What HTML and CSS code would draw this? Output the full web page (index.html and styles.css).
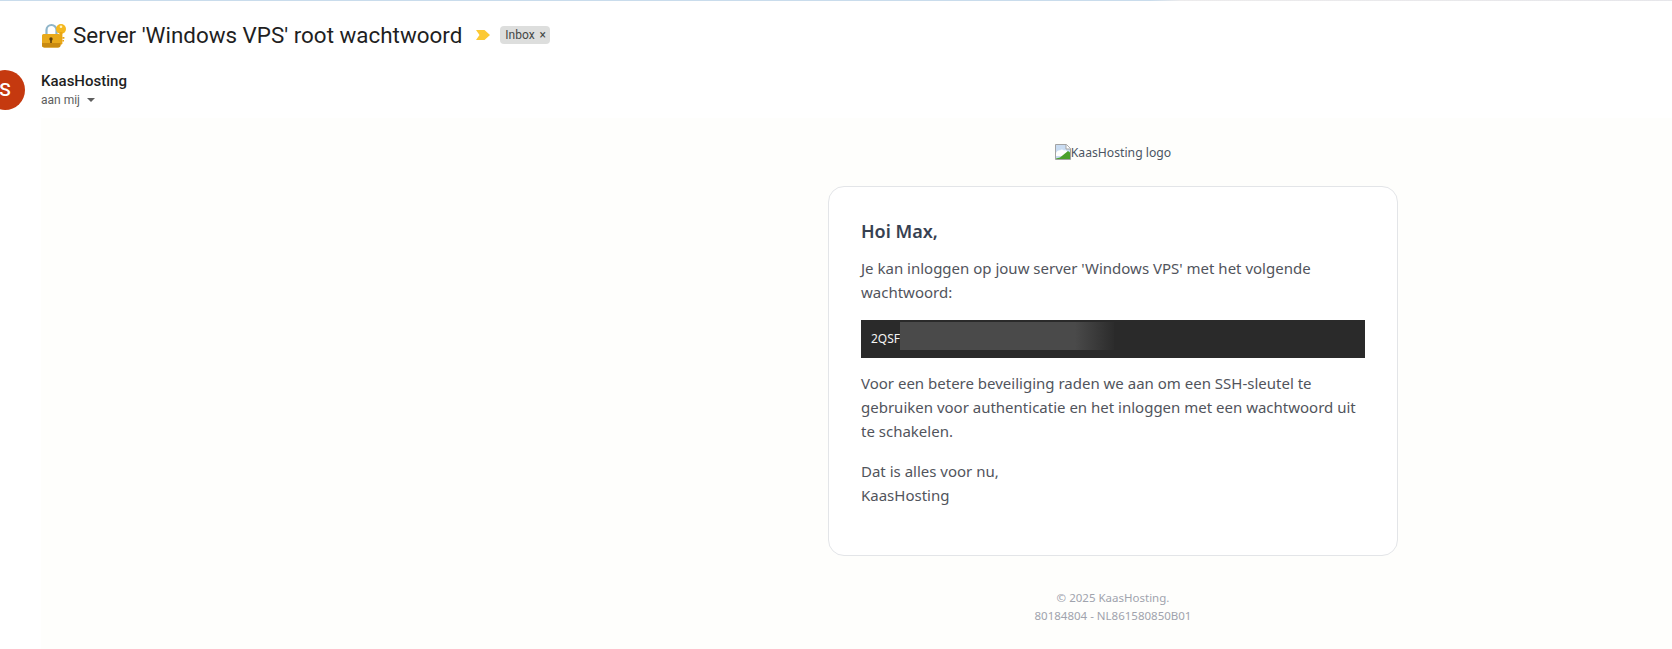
FILE: index.html
```html
<!DOCTYPE html>
<html lang="nl">
<head>
<meta charset="utf-8">
<title>Server 'Windows VPS' root wachtwoord</title>
<link rel="stylesheet" href="styles.css">
</head>
<body>
<div class="topline"></div>
<header class="subject">
  <svg class="lock" viewBox="0 0 26 26" width="26" height="26" aria-hidden="true">
    <path d="M5.500 12V8a5 5 0 0 1 10 0v4" fill="none" stroke="#8fb5c9" stroke-width="2.200"/>
    <circle cx="20" cy="7" r="5" fill="#f5b81f"/>
    <circle cx="20" cy="4.800" r="1.300" fill="#fff3c4"/>
    <path d="M18.600 10h2.800v11.500l-1.400 1.500-1.400-1.500z" fill="#e9a514"/>
    <path d="M21.400 15h2v1.800h-2zM21.400 18h1.600v1.600h-1.600z" fill="#e9a514"/>
    <path d="M2.500 12h15.500a1.500 1.500 0 0 1 1.500 1.500v9.500a2.500 2.500 0 0 1-2.500 2.500H3.500A2.500 2.500 0 0 1 1 23v-9.500A1.500 1.500 0 0 1 2.500 12z" fill="#e8a91c"/>
    <path d="M1 21h18.500v2a2.500 2.500 0 0 1-2.500 2.500H3.500A2.500 2.500 0 0 1 1 23z" fill="#c98a10"/>
    <circle cx="10" cy="17" r="1.700" fill="#5a3d0c"/>
    <rect x="9.200" y="17" width="1.600" height="4" fill="#5a3d0c"/>
  </svg>
  <h1 class="title">Server 'Windows VPS' root wachtwoord</h1>
  <svg class="marker" viewBox="0 0 14 10" width="14" height="10" aria-hidden="true">
    <path d="M0 0h8.500L14 5l-5.500 5H0l3.500-5z" fill="#fcc934"/>
  </svg>
  <span class="label">Inbox <span class="label-x">×</span></span>
</header>
<section class="sender">
  <div class="avatar">S</div>
  <div class="sender-text">
    <div class="sender-name">KaasHosting</div>
    <div class="recipient">aan mij <span class="caret"></span></div>
  </div>
</section>
<main class="mail">
  <div class="mail-column">
    <div class="logo">
      <svg class="broken" viewBox="0 0 16 16" width="16" height="16" aria-hidden="true">
        <path d="M.5.500h11l4 4v11H.500z" fill="#c9dcf2" stroke="#a3a3a3"/>
        <path d="M1 9c1-2 3-3 4-2.500 1-1.500 3-1 4 0 1.500-.5 3 0 3.500 1.500L8 12H1z" fill="#fff"/>
        <path d="M1 15V14.500l4-1L13 7l2 1.500V15z" fill="#4aa02c"/>
        <path d="M11 .500v4.500h4.500" fill="#fff" stroke="#a3a3a3"/>
      </svg><span>KaasHosting logo</span>
    </div>
    <article class="card">
      <h2 class="greeting">Hoi Max,</h2>
      <p class="para">Je kan inloggen op jouw server 'Windows VPS' met het volgende wachtwoord:</p>
      <div class="code">2QSF<div class="redact"></div></div>
      <p class="para">Voor een betere beveiliging raden we aan om een SSH-sleutel te gebruiken voor authenticatie en het inloggen met een wachtwoord uit te schakelen.</p>
      <p class="para">Dat is alles voor nu,<br>KaasHosting</p>
    </article>
    <footer class="foot">© 2025 KaasHosting.<br>80184804 - NL861580850B01</footer>
  </div>
</main>
</body>
</html>
```

FILE: styles.css
```css
html, body { margin: 0; height: 100%; }
body {
  display: flex;
  flex-direction: column;
  background: #fff;
  font-family: Roboto, "Liberation Sans", sans-serif;
  overflow: hidden;
}
.topline {
  height: 1px;
  flex: none;
  background: linear-gradient(90deg, #c9dcec 0, #c9dcec 1150px, #ecebec 1180px, #e6e6ea 100%);
}
.subject {
  display: flex;
  align-items: center;
  height: 44px;
  margin-top: 12px;
  padding-left: 41px;
  flex: none;
}
.lock { margin-right: 6px; }
.title {
  margin: 0;
  font-size: 22.400px;
  font-weight: 400;
  color: #1f1f1f;
  white-space: nowrap;
}
.marker { margin-left: 14px; }
.label {
  margin-left: 10px;
  padding: 0 4px 0 5px;
  height: 18px;
  line-height: 18px;
  background: #dddedd;
  border-radius: 4px;
  font-size: 12px;
  color: #444746;
}
.label-x { margin-left: 2px; }
.sender {
  display: flex;
  gap: 16px;
  height: 60px;
  margin-top: 1px;
  margin-left: -15px;
  flex: none;
}
.avatar {
  width: 40px;
  height: 40px;
  margin-top: 12px;
  border-radius: 50%;
  background: #c5390f;
  color: #fff;
  font-size: 19px;
  font-weight: 500;
  line-height: 40px;
  text-align: center;
}
.sender-name {
  margin-top: 13px;
  font-size: 15px;
  font-weight: 500;
  line-height: 20px;
  color: #1f1f1f;
}
.recipient {
  font-size: 12px;
  line-height: 18px;
  color: #5e5e5e;
}
.caret {
  display: inline-block;
  margin-left: 4px;
  vertical-align: 2px;
  border-left: 4px solid transparent;
  border-right: 4px solid transparent;
  border-top: 4px solid #5e5e5e;
}
.mail {
  flex: 1;
  margin-left: 41px;
  padding-left: 787px;
  background: #fefefc;
  font-family: "Noto Sans", "Open Sans", sans-serif;
}
.mail-column {
  width: 570px;
  text-align: center;
}
.logo {
  display: flex;
  justify-content: center;
  align-items: center;
  height: 20px;
  margin-top: 24px;
  font-size: 12.200px;
  color: #4b5563;
}
.card {
  margin-top: 24px;
  padding: 32px 32px 36px;
  box-sizing: border-box;
  height: 370px;
  border: 1px solid #e3e5e8;
  border-radius: 16px;
  background: #fff;
  text-align: left;
}
.greeting {
  margin: 0 0 13px;
  font-size: 18px;
  line-height: 24px;
  font-weight: 600;
  color: #374151;
}
.para {
  margin: 0 0 16px;
  font-size: 15px;
  line-height: 24px;
  color: #51545c;
}
.code {
  position: relative;
  height: 38px;
  margin-bottom: 13px;
  padding-left: 10px;
  background: #2a2a2a;
  color: #f3f3f3;
  font-size: 12px;
  line-height: 38px;
}
.redact {
  position: absolute;
  left: 39px;
  top: 2px;
  width: 214px;
  height: 28px;
  background: linear-gradient(90deg, #4a4a4a 0, #4a4a4a 175px, #2c2c2c 214px);
}
.foot {
  margin-top: 33px;
  font-size: 11.500px;
  line-height: 18px;
  color: #a0a3ad;
}
```
